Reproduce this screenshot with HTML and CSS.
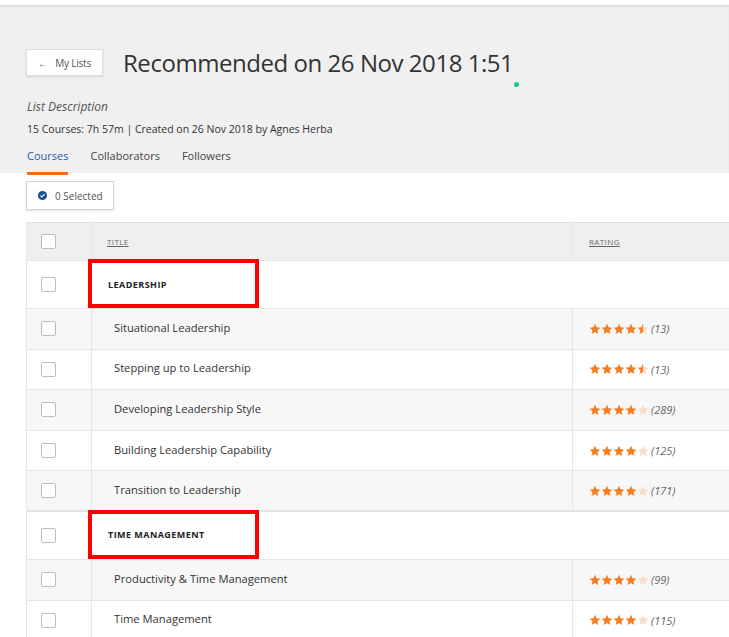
FILE: index.html
```html
<!doctype html>
<html lang="en">
    <head>
        <meta charset="UTF-8" />
        <meta name="viewport" content="width=device-width, initial-scale=1.0" />
        <title>Recommended on 26 Nov 2018 1:51 | My Lists</title>
        <link rel="stylesheet" href="styles.css">
    </head>
    <body>
        <svg width="0" height="0" class="defs">
            <defs>
                <symbol id="star" viewBox="0 0 24 24">
                    <path d="M12 1.5l3.1 7.1 7.7.7-5.8 5.1 1.7 7.6L12 18.1 5.3 22l1.7-7.6L1.2 9.3l7.7-.7z" />
                </symbol>
                <linearGradient id="half">
                    <stop offset="50%" stop-color="#f57c1f" />
                    <stop offset="50%" stop-color="#fbdcc6" />
                </linearGradient>
            </defs>
        </svg>

        <header class="list-head">
            <div class="title-row">
                <button class="back-btn"><span class="arrow">&larr;</span> My Lists</button>
                <h1>Recommended on 26 Nov 2018 1:51</h1>
                <span class="dot"></span>
            </div>
            <p class="desc">List Description</p>
            <p class="meta">15 Courses: 7h 57m | Created on 26 Nov 2018 by Agnes Herba</p>
            <nav class="tabs">
                <a class="tab active">Courses</a>
                <a class="tab">Collaborators</a>
                <a class="tab">Followers</a>
            </nav>
        </header>

        <section class="content">
            <button class="select-btn">
                <svg viewBox="0 0 16 16" class="check">
                    <circle cx="8" cy="8" r="8" fill="#1d4f91" />
                    <path d="M4.3 8.2l2.5 2.4 4.9-5" fill="none" stroke="#fff" stroke-width="2" />
                </svg>
                0 Selected
            </button>

            <div class="table">
                <div class="row head">
                    <div class="cell box"><span class="cb"></span></div>
                    <div class="cell title"><span class="th">Title</span></div>
                    <div class="cell rating"><span class="th">Rating</span></div>
                </div>

                <div class="row group">
                    <div class="cell box"><span class="cb"></span></div>
                    <div class="cell gtitle">Leadership<span class="mark"></span></div>
                </div>
                <div class="row course alt">
                    <div class="cell box"><span class="cb"></span></div>
                    <div class="cell title">Situational Leadership</div>
                    <div class="cell rating" data-stars="4.5">(13)</div>
                </div>
                <div class="row course">
                    <div class="cell box"><span class="cb"></span></div>
                    <div class="cell title">Stepping up to Leadership</div>
                    <div class="cell rating" data-stars="4.5">(13)</div>
                </div>
                <div class="row course alt">
                    <div class="cell box"><span class="cb"></span></div>
                    <div class="cell title">Developing Leadership Style</div>
                    <div class="cell rating" data-stars="4">(289)</div>
                </div>
                <div class="row course">
                    <div class="cell box"><span class="cb"></span></div>
                    <div class="cell title">Building Leadership Capability</div>
                    <div class="cell rating" data-stars="4">(125)</div>
                </div>
                <div class="row course alt last">
                    <div class="cell box"><span class="cb"></span></div>
                    <div class="cell title">Transition to Leadership</div>
                    <div class="cell rating" data-stars="4">(171)</div>
                </div>

                <div class="row group">
                    <div class="cell box"><span class="cb"></span></div>
                    <div class="cell gtitle">Time Management<span class="mark"></span></div>
                </div>
                <div class="row course alt">
                    <div class="cell box"><span class="cb"></span></div>
                    <div class="cell title">Productivity &amp; Time Management</div>
                    <div class="cell rating" data-stars="4">(99)</div>
                </div>
                <div class="row course">
                    <div class="cell box"><span class="cb"></span></div>
                    <div class="cell title">Time Management</div>
                    <div class="cell rating" data-stars="4">(115)</div>
                </div>
            </div>
        </section>

        <script>
            // build the star strip in front of each count
            for (const cell of document.querySelectorAll(".course .rating")) {
                const value = parseFloat(cell.dataset.stars);
                const count = cell.textContent;
                let stars = "";
                for (let i = 1; i <= 5; i++) {
                    let fill = "#fbdcc6";
                    if (i <= value) fill = "#f57c1f";
                    else if (i - 0.5 <= value) fill = "url(#half)";
                    stars += `<svg class="star" fill="${fill}"><use href="#star" /></svg>`;
                }
                cell.innerHTML = `<span class="stars">${stars}</span><span class="count">${count}</span>`;
            }
        </script>
    </body>
</html>
```

FILE: styles.css
```css
html,
body {
    margin: 0;
    padding: 0;
    background: #fff;
    font-family: "Open Sans", "Liberation Sans", sans-serif;
    color: #333;
}

.defs {
    position: absolute;
}

.list-head {
    margin-top: 5px;
    background-color: #f0f0f0;
    border-top: 1px solid #dcdcdc;
    box-shadow: inset 0 1px 2px rgba(0, 0, 0, 0.06);
    padding: 43px 0 0 26px;
    height: 124px;
}

.title-row {
    display: flex;
    align-items: center;
    height: 27px;
    position: relative;
}

.back-btn {
    width: 77px;
    height: 27px;
    background: #fff;
    border: 1px solid #dedede;
    box-shadow: 0 1px 2px rgba(0, 0, 0, 0.12);
    font-family: inherit;
    font-size: 10px;
    color: #555;
    padding: 0;
    letter-spacing: -0.2px;
}

.back-btn .arrow {
    color: #2a5fa6;
    margin-right: 5px;
}

h1 {
    margin: 0 0 0 20px;
    font-size: 24px;
    font-weight: 400;
    color: #333;
    letter-spacing: -0.45px;
    line-height: 27px;
}

.dot {
    position: absolute;
    left: 488px;
    top: 33px;
    width: 5px;
    height: 5px;
    border-radius: 50%;
    background: #17c99a;
}

.desc {
    margin: 24px 0 0 1px;
    font-size: 12px;
    font-style: italic;
    color: #555;
    line-height: 14px;
}

.meta {
    margin: 8px 0 0 1px;
    font-size: 10.5px;
    color: #333;
    line-height: 14px;
}

.tabs {
    display: flex;
    gap: 22px;
    margin: 13px 0 0 1px;
}

.tab {
    font-size: 11px;
    color: #444;
    line-height: 14px;
    padding-bottom: 9px;
    border-bottom: 3px solid transparent;
}

.tab.active {
    color: #1d5ea8;
    border-bottom-color: #f26a21;
}

.content {
    padding: 8px 0 0 26px;
}

.select-btn {
    display: flex;
    align-items: center;
    gap: 8px;
    width: 88px;
    height: 29px;
    padding: 0 0 0 11px;
    background: #fff;
    border: 1px solid #d4d4d4;
    box-shadow: 0 1px 2px rgba(0, 0, 0, 0.12);
    font-family: inherit;
    font-size: 10px;
    color: #555;
}

.check {
    width: 9px;
    height: 9px;
}

.table {
    margin-top: 12px;
    border-left: 1px solid #e6e6e6;
}

.row {
    display: flex;
    border-bottom: 1px solid #e6e6e6;
}

.row.head {
    height: 37px;
    background: #efefef;
    border-top: 1px solid #e2e2e2;
}

.row.group {
    height: 47px;
    background: #fff;
}

.row.course {
    height: 39.6px;
    background: #fff;
}

.row.alt {
    background: #f7f7f7;
}

.row.last {
    height: 38.6px;
    border-bottom: 2px solid #e2e2e2;
}

.cell {
    display: flex;
    align-items: center;
}

.cell.box {
    width: 65px;
    flex: none;
    border-right: 1px solid #e6e6e6;
    padding-left: 14px;
    box-sizing: border-box;
}

.row.group .cell.box {
    border-right: none;
}

.cb {
    width: 13px;
    height: 13px;
    border: 1px solid #bdbdbd;
    border-radius: 2px;
    background: #fff;
}

.cell.title {
    width: 481px;
    flex: none;
    border-right: 1px solid #e6e6e6;
    padding-left: 22px;
    box-sizing: border-box;
    font-size: 11.2px;
    color: #333;
}

.row.course .cell.title {
    padding-bottom: 3px;
}

.row.head .cell.title {
    padding-left: 15px;
}

.cell.rating {
    flex: 1;
    padding-left: 16px;
}

.th {
    font-size: 8px;
    text-transform: uppercase;
    text-decoration: underline;
    color: #666;
    letter-spacing: 0.4px;
}

.cell.gtitle {
    position: relative;
    flex: 1;
    padding-left: 16px;
    padding-bottom: 1px;
    font-size: 9px;
    font-weight: 700;
    text-transform: uppercase;
    letter-spacing: 0.45px;
    color: #222;
}

.mark {
    position: absolute;
    left: -4px;
    top: -2px;
    width: 163px;
    height: 41px;
    border: 4px solid #ff0000;
}

.stars {
    display: flex;
    margin-right: 2px;
}

.star {
    width: 12px;
    height: 12px;
}

.count {
    font-size: 11px;
    font-style: italic;
    color: #666;
}
```
